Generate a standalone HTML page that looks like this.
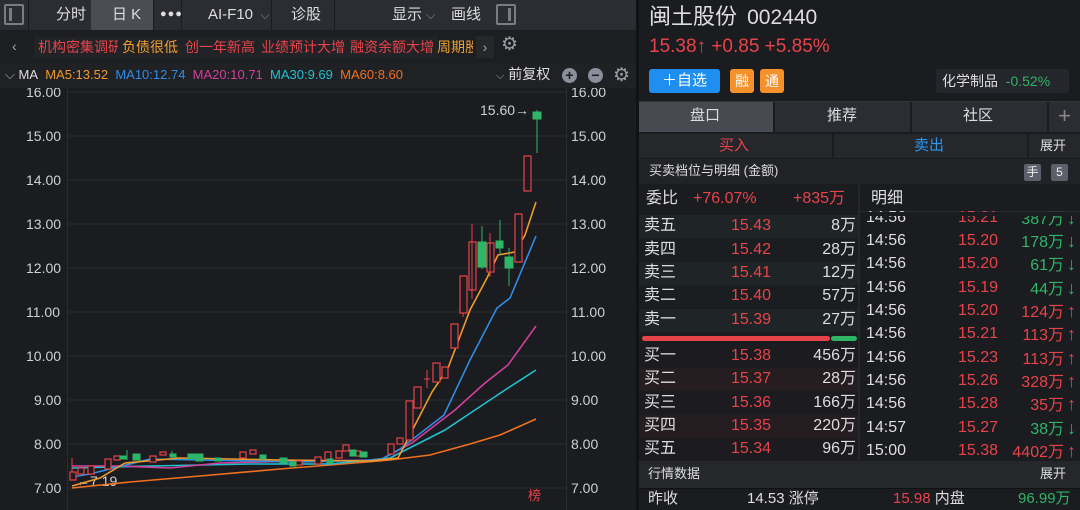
<!DOCTYPE html>
<html><head><meta charset="utf-8"><style>
*{margin:0;padding:0;box-sizing:border-box}
body{width:1080px;height:510px;background:#1b1c20;overflow:hidden;font-family:"Liberation Sans","Noto Sans CJK SC",sans-serif;color:#d8d8da;position:relative;line-height:1.2}
.a{position:absolute;white-space:nowrap}
.r{color:#e8434a}.g{color:#2fb567}.w{color:#dedee0}
</style></head><body>
<!-- top toolbar -->
<div class="a" style="left:0;top:0;width:636px;height:30px;background:#2b2d32"></div>
<div class="a" style="left:4px;top:4px;width:20px;height:21px;border:2px solid #7a7d85;border-radius:2px"><div style="position:absolute;left:3px;top:2px;width:3px;height:13px;background:#7a7d85"></div></div>
<div class="a" style="left:28px;top:0;width:1px;height:30px;background:#1b1c20"></div>
<div class="a w" style="left:56px;top:6px;font-size:15px">分时</div>
<div class="a" style="left:91px;top:0;width:62px;height:30px;background:#4a4d54"></div>
<div class="a w" style="left:112px;top:6px;font-size:15px">日 K</div>
<div class="a" style="left:153px;top:0;width:1px;height:30px;background:#1b1c20"></div>
<div class="a w" style="left:160px;top:8px;font-size:11px;letter-spacing:1px">●●●</div>
<div class="a" style="left:181px;top:0;width:1px;height:30px;background:#1b1c20"></div>
<div class="a w" style="left:208px;top:6px;font-size:15px">AI-F10 <span style="color:#888;font-size:12px">&nbsp;⌵</span></div>
<div class="a" style="left:271px;top:0;width:1px;height:30px;background:#1b1c20"></div>
<div class="a w" style="left:291px;top:6px;font-size:15px">诊股</div>
<div class="a" style="left:334px;top:0;width:1px;height:30px;background:#1b1c20"></div>
<div class="a w" style="left:392px;top:6px;font-size:15px">显示 <span style="color:#888;font-size:12px">⌵</span></div>
<div class="a w" style="left:451px;top:6px;font-size:15px">画线</div>
<div class="a" style="left:496px;top:4px;width:20px;height:21px;border:2px solid #7a7d85;border-radius:2px"><div style="position:absolute;right:3px;top:2px;width:3px;height:13px;background:#7a7d85"></div></div>
<!-- tags row -->
<div class="a" style="left:0;top:30px;width:636px;height:33px;background:#1d1e22"></div>
<div class="a" style="left:12px;top:38px;color:#aaa;font-size:14px">‹</div>
<div class="a r" style="left:34px;top:37px;font-size:14px;padding:2px 4px;background:#222327">机构密集调研</div>
<div class="a" style="left:118px;top:37px;font-size:14px;padding:2px 4px;background:#222327;color:#f0a030">负债很低</div>
<div class="a r" style="left:181px;top:37px;font-size:14px;padding:2px 4px;background:#222327">创一年新高</div>
<div class="a r" style="left:257px;top:37px;font-size:14px;padding:2px 4px;background:#222327">业绩预计大增</div>
<div class="a r" style="left:346px;top:37px;font-size:14px;padding:2px 4px;background:#222327">融资余额大增</div>
<div class="a" style="left:433px;top:37px;font-size:14px;padding:2px 4px;color:#f0a030;width:40px;overflow:hidden">周期股</div>
<div class="a" style="left:476px;top:36px;width:18px;height:22px;background:#26272b;color:#aaa;font-size:14px;text-align:center;line-height:22px">›</div>
<div class="a" style="left:501px;top:35px;color:#9a9da5;font-size:19px;line-height:1">⚙</div>
<!-- MA row -->
<div class="a" style="left:0;top:63px;width:636px;height:25px;background:#202125"></div>
<div class="a" style="left:5px;top:67px;font-size:13px"><span style="color:#aaa">⌵</span> <span class="w">MA</span>&nbsp; <span style="color:#f09a2c">MA5:13.52</span>&nbsp; <span style="color:#2f8de4">MA10:12.74</span>&nbsp; <span style="color:#d23f9c">MA20:10.71</span>&nbsp; <span style="color:#1fc0d0">MA30:9.69</span>&nbsp; <span style="color:#f0701c">MA60:8.60</span></div>
<div class="a w" style="left:496px;top:66px;font-size:14px"><span style="color:#aaa;font-size:11px">⌵</span> 前复权</div>
<div class="a" style="left:562px;top:68px;width:15px;height:15px;border-radius:50%;background:#8a8f9a;color:#1b1c20;font-size:14px;line-height:15px;text-align:center;font-weight:bold">+</div>
<div class="a" style="left:588px;top:68px;width:15px;height:15px;border-radius:50%;background:#8a8f9a;color:#1b1c20;font-size:14px;line-height:14px;text-align:center;font-weight:bold">−</div>
<div class="a" style="left:613px;top:66px;color:#9a9da5;font-size:19px;line-height:1">⚙</div>
<!-- chart -->
<svg class="a" style="left:0;top:88px" width="636" height="422">
<g stroke="#2a2b30" stroke-width="1">
<line x1="67" y1="4" x2="566" y2="4"/><line x1="67" y1="48" x2="566" y2="48"/><line x1="67" y1="92" x2="566" y2="92"/><line x1="67" y1="136" x2="566" y2="136"/><line x1="67" y1="180" x2="566" y2="180"/><line x1="67" y1="224" x2="566" y2="224"/><line x1="67" y1="268" x2="566" y2="268"/><line x1="67" y1="312" x2="566" y2="312"/><line x1="67" y1="356" x2="566" y2="356"/><line x1="67" y1="400" x2="566" y2="400"/>
<line x1="67.5" y1="0" x2="67.5" y2="422"/><line x1="566.5" y1="0" x2="566.5" y2="422"/>
</g>
<g fill="#cfd0d3" font-size="14" font-family="Liberation Sans">
<text x="26" y="9">16.00</text><text x="26" y="53">15.00</text><text x="26" y="97">14.00</text><text x="26" y="141">13.00</text><text x="26" y="185">12.00</text><text x="26" y="229">11.00</text><text x="26" y="273">10.00</text><text x="34" y="317">9.00</text><text x="34" y="361">8.00</text><text x="34" y="405">7.00</text>
<text x="571" y="9">16.00</text><text x="571" y="53">15.00</text><text x="571" y="97">14.00</text><text x="571" y="141">13.00</text><text x="571" y="185">12.00</text><text x="571" y="229">11.00</text><text x="571" y="273">10.00</text><text x="571" y="317">9.00</text><text x="571" y="361">8.00</text><text x="571" y="405">7.00</text>
<text x="480" y="27">15.60→</text><text x="76" y="398">←7.19</text>
</g>
<text x="528" y="412" fill="#e8434a" font-size="13">榜</text>
<g fill="none" stroke-width="1.6">
<polyline stroke="#f07020" points="72,400 130,394 200,388 280,381 330,377 390,372 430,367 470,356 500,347 536,331"/>
<polyline stroke="#1fc0d0" points="72,380 150,378 250,376 330,376 390,370 445,342 475,322 505,302 536,282"/>
<polyline stroke="#d23f9c" points="72,378 120,378 170,380 220,375 300,373 380,372 412,355 455,322 485,295 508,277 536,238"/>
<polyline stroke="#2f8de4" points="72,389 90,386 150,371 200,372 300,374 380,372 400,361 444,327 470,272 497,220 510,210 536,148"/>
<polyline stroke="#f09a2c" points="72,398 100,390 125,375 180,370 280,372 370,373 398,370 432,304 448,280 470,222 487,190 498,167 515,164 525,147 536,114"/>
</g>
<g stroke="#e8434a" fill="#1b1c20" stroke-width="1.2">
<rect x="70" y="384" width="6" height="8"/><rect x="78" y="380" width="6" height="6"/><rect x="88" y="378" width="6" height="8"/><rect x="105" y="371" width="6" height="10"/><rect x="114" y="368" width="6" height="4"/><rect x="150" y="368" width="6" height="6"/><rect x="160" y="364" width="6" height="3"/><rect x="240" y="364" width="6" height="6"/><rect x="250" y="362" width="6" height="4"/><rect x="296" y="373" width="6" height="4"/><rect x="315" y="369" width="6" height="7"/><rect x="325" y="364" width="6" height="8"/><rect x="336" y="363" width="6" height="7"/><rect x="343" y="357" width="6" height="6"/><rect x="355" y="363" width="6" height="5"/><rect x="388" y="356" width="6" height="10"/><rect x="397" y="350" width="6" height="6"/>
<rect x="406" y="313" width="7" height="39"/><rect x="414" y="299" width="7" height="21"/><rect x="433" y="275" width="7" height="19"/><rect x="442" y="279" width="6" height="11"/><rect x="451" y="236" width="7" height="24"/><rect x="460" y="188" width="7" height="37"/><rect x="469" y="154" width="7" height="48"/><rect x="487" y="155" width="7" height="29"/><rect x="515" y="126" width="7" height="48"/><rect x="524" y="68" width="7" height="35"/>
</g>
<g stroke="#e8434a" stroke-width="1">
<line x1="72" y1="370" x2="72" y2="384"/><line x1="427" y1="282" x2="427" y2="300"/><line x1="424" y1="291" x2="430" y2="291"/><line x1="472" y1="136" x2="472" y2="211"/><line x1="490" y1="145" x2="490" y2="189"/><line x1="463" y1="225" x2="463" y2="229"/>
</g>
<g fill="#2fb567" stroke="#2fb567" stroke-width="1">
<rect x="120" y="368" width="6" height="3"/><rect x="133" y="366" width="7" height="6"/><rect x="170" y="366" width="6" height="3"/><rect x="188" y="366" width="7" height="5"/><rect x="196" y="366" width="7" height="7"/><rect x="215" y="370" width="6" height="3"/><rect x="260" y="367" width="6" height="4"/><rect x="280" y="370" width="7" height="5"/><rect x="290" y="374" width="6" height="4"/><rect x="327" y="371" width="6" height="4"/><rect x="350" y="362" width="6" height="6"/><rect x="360" y="364" width="7" height="5"/>
<rect x="478" y="154" width="8" height="25"/><line x1="482" y1="138" x2="482" y2="181"/>
<rect x="496" y="153" width="7" height="7"/><line x1="500" y1="132" x2="500" y2="167"/>
<rect x="505" y="169" width="8" height="11"/><line x1="509" y1="160" x2="509" y2="198"/>
<rect x="533" y="24" width="8" height="7"/><line x1="537" y1="22" x2="537" y2="65"/>
<line x1="127" y1="362" x2="127" y2="372"/><line x1="172" y1="363" x2="172" y2="371"/>
</g>
</svg>
<div class="a" style="left:636px;top:0;width:3px;height:510px;background:#111214"></div>
<!-- right panel -->
<div class="a w" style="left:649px;top:4px;font-size:22px">闽土股份 <span style="font-size:21px;margin-left:4px">002440</span></div>
<div class="a r" style="left:649px;top:36px;font-size:19px">15.38↑ +0.85 +5.85%</div>
<div class="a" style="left:649px;top:69px;width:71px;height:24px;background:#1e8ff0;border-radius:3px;color:#fff;font-size:15px;text-align:center;line-height:24px">＋自选</div>
<div class="a" style="left:730px;top:69px;width:24px;height:24px;background:#f5902a;border-radius:3px;color:#fff;font-size:14px;text-align:center;line-height:24px">融</div>
<div class="a" style="left:760px;top:69px;width:24px;height:24px;background:#f5902a;border-radius:3px;color:#fff;font-size:14px;text-align:center;line-height:24px">通</div>
<div class="a" style="left:936px;top:69px;width:133px;height:24px;background:#24262b;border-radius:3px;font-size:14px;line-height:24px;padding-left:6px"><span class="w">化学制品</span> <span class="g">&nbsp;-0.52%</span></div>
<div class="a" style="left:639px;top:101px;width:441px;height:1px;background:#333"></div>
<div class="a" style="left:639px;top:102px;width:134px;height:30px;background:#474a51"></div>
<div class="a w" style="left:690px;top:107px;font-size:15px">盘口</div>
<div class="a" style="left:775px;top:102px;width:135px;height:30px;background:#2b2d32"></div>
<div class="a w" style="left:827px;top:107px;font-size:15px">推荐</div>
<div class="a" style="left:912px;top:102px;width:135px;height:30px;background:#2b2d32"></div>
<div class="a w" style="left:963px;top:107px;font-size:15px">社区</div>
<div class="a" style="left:1049px;top:102px;width:31px;height:30px;background:#2b2d32;color:#888;font-size:22px;text-align:center;line-height:28px">+</div>
<div class="a" style="left:639px;top:134px;width:193px;height:24px;background:#25272b"></div>
<div class="a r" style="left:719px;top:137px;font-size:15px">买入</div>
<div class="a" style="left:834px;top:134px;width:193px;height:24px;background:#25272b"></div>
<div class="a" style="left:914px;top:137px;font-size:15px;color:#2a98f0">卖出</div>
<div class="a" style="left:1029px;top:134px;width:51px;height:24px;background:#25272b"></div>
<div class="a w" style="left:1040px;top:138px;font-size:13px">展开</div>
<div class="a" style="left:639px;top:159px;width:441px;height:25px;background:#222327"></div>
<div class="a w" style="left:649px;top:163px;font-size:13px">买卖档位与明细 (金额)</div>
<div class="a" style="left:1024px;top:164px;width:17px;height:17px;background:#5c606a;border-radius:2px;font-size:12px;text-align:center;line-height:17px;color:#eee">手</div>
<div class="a" style="left:1051px;top:164px;width:17px;height:17px;background:#5c606a;border-radius:2px;font-size:12px;text-align:center;line-height:17px;color:#eee">5</div>
<div class="a" style="left:858px;top:185px;width:2px;height:275px;background:#25272b"></div>
<div class="a w" style="left:646px;top:189px;font-size:16px;line-height:20px">委比</div>
<div class="a r" style="left:693px;top:189px;font-size:16px;line-height:20px">+76.07%</div>
<div class="a r" style="left:793px;top:189px;font-size:16px;line-height:20px">+835万</div>
<div class="a w" style="left:871px;top:189px;font-size:16px;line-height:20px">明细</div>
<div class="a" style="left:860px;top:211px;width:220px;height:1px;background:#2a2b30"></div>
<div id="ob"></div>
<div class="a" style="left:642px;top:336px;width:188px;height:5px;border-radius:3px;background:#e8434a"></div>
<div class="a" style="left:831px;top:336px;width:26px;height:5px;border-radius:3px;background:#2fb567"></div>
<div class="a" style="left:639px;top:461px;width:441px;height:27px;background:#25272b"></div>
<div class="a w" style="left:648px;top:466px;font-size:13px">行情数据</div>
<div class="a w" style="left:1040px;top:466px;font-size:13px">展开</div>
<div class="a" style="left:639px;top:488px;width:441px;height:1px;background:#111"></div>
<div class="a w" style="left:648px;top:490px;font-size:15px">昨收</div>
<div class="a w" style="left:747px;top:490px;font-size:15px">14.53 涨停</div>
<div class="a r" style="left:893px;top:490px;font-size:15px">15.98 <span class="w">内盘</span></div>
<div class="a g" style="left:1018px;top:490px;font-size:15px">96.99万</div>
<script>
var rows=[["卖五","15.43","8万",226],["卖四","15.42","28万",250],["卖三","15.41","12万",273],["卖二","15.40","57万",296],["卖一","15.39","27万",320],["买一","15.38","456万",356],["买二","15.37","28万",379],["买三","15.36","166万",403],["买四","15.35","220万",426],["买五","15.34","96万",449]];
var h="";rows.forEach(function(r,i){var bg=i<5?(i%2==0?"#1f2527":"#1b1e21"):(i%2==0?"#261d20":"#1c1c20");var t=r[3]-10;
h+='<div class="a" style="left:639px;top:'+(r[3]-11)+'px;width:219px;height:23px;background:'+bg+'"></div>';
h+='<div class="a w" style="left:644px;top:'+t+'px;font-size:16px;line-height:20px">'+r[0]+'</div>';
h+='<div class="a r" style="left:731px;top:'+t+'px;font-size:16px;line-height:20px">'+r[1]+'</div>';
h+='<div class="a w" style="right:224px;top:'+t+'px;font-size:16px;line-height:20px">'+r[2]+'</div>';});
var d=[["14:56","15.21","387万",0,218],["14:56","15.20","178万",0,241],["14:56","15.20","61万",0,264],["14:56","15.19","44万",0,288],["14:56","15.20","124万",1,311],["14:56","15.21","113万",1,334],["14:56","15.23","113万",1,358],["14:56","15.26","328万",1,381],["14:56","15.28","35万",1,404],["14:57","15.27","38万",0,428],["15:00","15.38","4402万",1,451]];
d.forEach(function(r,i){var c=r[3]?"r":"g";var t=r[4]-10;var fs=r[2].length>5?14:16;
h+='<div class="a w" style="left:866px;top:'+t+'px;font-size:16px;line-height:20px">'+r[0]+'</div>';
h+='<div class="a r" style="left:958px;top:'+t+'px;font-size:16px;line-height:20px">'+r[1]+'</div>';
h+='<div class="a '+c+'" style="right:4px;top:'+t+'px;font-size:'+fs+'px;line-height:20px">'+r[2]+'<span style="font-size:18px;margin-left:3px">'+(r[3]?'↑':'↓')+'</span></div>';});
h+='<div class="a" style="left:860px;top:212px;width:220px;height:4px;background:#1b1c20"></div>';
document.getElementById("ob").innerHTML=h;
</script>
</body></html>
